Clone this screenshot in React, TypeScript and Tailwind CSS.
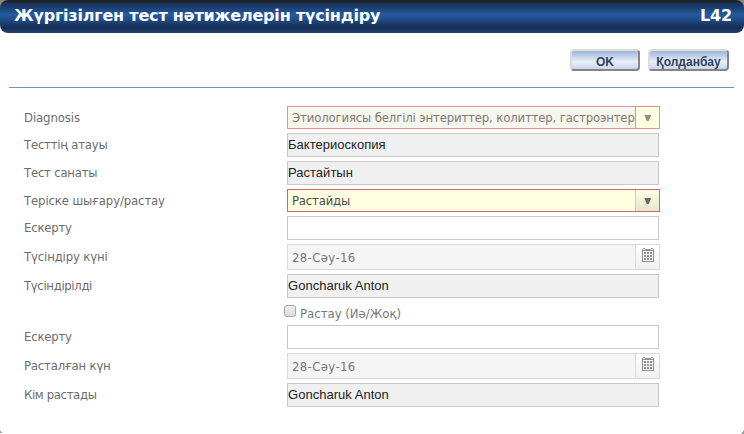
import type { ReactNode } from 'react';

const ui = "font-['DejaVu_Sans_Condensed','DejaVu_Sans',sans-serif] [font-stretch:condensed]";
const arial = "font-['Liberation_Sans',Arial,sans-serif]";

interface RowProps {
  label: string;
  height?: string;
  labelStyle?: string;
  children: ReactNode;
}

function Row({ label, height = 'h-6', labelStyle = 'pt-1 tracking-[-0.22px]', children }: RowProps) {
  return (
    <div className={`mb-1 flex ${height}`}>
      <div className={`w-[263px] shrink-0 text-[13px] leading-4 whitespace-nowrap text-[#6c6c6c] ${labelStyle}`}>{label}</div>
      {children}
    </div>
  );
}

function ReadOnly({ text }: { text: string }) {
  return (
    <div className={`${arial} h-6 w-[372px] border border-[#c9c9c9] bg-[#f0f0f0] text-[13px] leading-[21px] tracking-[0.02px] whitespace-nowrap text-[#222]`}>
      {text}
    </div>
  );
}

function Empty() {
  return <div className="h-6 w-[372px] border border-[#c9c9c9] bg-white" />;
}

function Arrow({ color }: { color: string }) {
  return (
    <svg width="8" height="6" viewBox="0 0 8 6" fill={color}>
      <path d="M0.3 0H7.2L4.7 6H2.8Z" />
    </svg>
  );
}

function DateField({ text }: { text: string }) {
  return (
    <div className="flex h-[26px] w-[373px] border border-[#dadada] bg-[#f5f5f5]">
      <div className="w-[347px] pt-[5px] pl-1 text-[13px] leading-4 tracking-[0.35px] text-[#777]">{text}</div>
      <div className="flex w-6 justify-center border-l border-[#dadada] bg-linear-to-b from-white to-[#f0f0f0] pt-[3px]">
        <svg width="12" height="14" viewBox="0 0 12 14" shapeRendering="crispEdges" fill="#909090">
          <path fillRule="evenodd" d="M0 1H12V14H0ZM1 3V13H11V3Z" />
          <path d="M1 0h2v1h-2zM9 0h2v1h-2zM2 4h2v2h-2zM5 4h2v2h-2zM8 4h2v2h-2zM2 7h2v2h-2zM5 7h2v2h-2zM8 7h2v2h-2zM2 10h2v2h-2zM5 10h2v2h-2zM8 10h2v2h-2z" />
          <path fill="#fff" d="M1 1h2v1h-2zM9 1h2v1h-2z" />
        </svg>
      </div>
    </div>
  );
}

function Button({ text, width }: { text: string; width: string }) {
  return (
    <button className={`${arial} ${width} h-[22px] rounded-[4px] border-2 border-t-[#dcdcdc] border-r-[#858585] border-b-[#858585] border-l-[#dcdcdc] bg-linear-to-b from-[#9fb5d8] via-[#e9eff7] via-60% to-[#c8d6e8] pt-1 text-xs leading-[14px] font-bold whitespace-nowrap text-[#2b3f60]`}>
      {text}
    </button>
  );
}

export default function App() {
  return (
    <div className={`${ui} flex h-[434px] w-[744px] flex-col overflow-hidden bg-white`}>
      <div className="bg-linear-to-b from-[#8f8b78] from-50% to-white to-50%">
        <header className="flex h-[33px] justify-between rounded-[8px] bg-[linear-gradient(#20231f_0px,#20231f_1px,#182f50_3px,#1c4175_8px,#265aa0_15px,#1f4a85_20px,#162d50_28px,#1d4275_33px)] pt-[6px] pr-3 pl-[14px] font-['DejaVu_Sans'] [font-stretch:normal] text-base leading-5 font-bold tracking-[-0.19px] whitespace-nowrap text-white">
          <h1>Жүргізілген тест нәтижелерін түсіндіру</h1>
          <span>L42</span>
        </header>
      </div>
      <div className="flex justify-end gap-2 pt-4 pr-[15px]">
        <Button text="OK" width="w-[70px]" />
        <Button text="Қолданбау" width="w-[81px]" />
      </div>
      <hr className="mt-4 mr-[10px] ml-[9px] border-t border-[#7090bf]" />
      <form className="pt-[18px] pl-6">
        <Row label="Diagnosis" height="h-[23px]" labelStyle="pt-1 tracking-[-0.1px]">
          <div className="flex h-[23px] w-[373px] border border-[#e89090] bg-[#f6f5ee]">
            <div className="w-[347px] pt-[3px] pl-1 text-[13px] leading-4 tracking-[-0.15px] whitespace-nowrap text-[#7c7c74]">Этиологиясы белгілі энтериттер, колиттер, гастроэнтер</div>
            <div className="flex w-6 items-center justify-center border-l border-[#e89090] bg-[#ffffe1]"><Arrow color="#8e8e84" /></div>
          </div>
        </Row>
        <Row label="Тесттің атауы"><ReadOnly text="Бактериоскопия" /></Row>
        <Row label="Тест санаты"><ReadOnly text="Растайтын" /></Row>
        <Row label="Теріске шығару/растау" height="h-[23px]" labelStyle="pt-1 tracking-[-0.13px]">
          <div className="flex h-[23px] w-[373px] border border-[#df626a] bg-[#ffffe1]">
            <div className="w-[347px] pt-[3px] pl-1 text-[13px] leading-4 tracking-[-0.2px] text-[#4c4c4c]">Растайды</div>
            <div className="flex w-6 items-center justify-center border-l border-[#c9c9c9] bg-linear-to-b from-[#ffffe6] to-[#e5e5ca]"><Arrow color="#666" /></div>
          </div>
        </Row>
        <Row label="Ескерту"><Empty /></Row>
        <Row label="Түсіндіру күні" height="h-[26px]" labelStyle="pt-[5px] tracking-[-0.15px]"><DateField text="28-Сәу-16" /></Row>
        <Row label="Түсіндірілді" labelStyle="pt-1 tracking-[-0.35px]"><ReadOnly text="Goncharuk Anton" /></Row>
        <div className="mt-[7px] flex h-5 pl-[260px]">
          <div className="h-3 w-3 rounded-[3px] border border-[#a8a8a8] bg-linear-to-b from-[#eee] to-[#dcdcdc]" />
          <span className="pt-[1px] pl-1 text-[13px] leading-4 text-[#777]">Растау (Иә/Жоқ)</span>
        </div>
        <Row label="Ескерту"><Empty /></Row>
        <Row label="Расталған күн" height="h-[26px]" labelStyle="pt-[5px] tracking-[-0.2px]"><DateField text="28-Сәу-16" /></Row>
        <Row label="Кім растады" labelStyle="pt-1 tracking-[-0.35px]"><ReadOnly text="Goncharuk Anton" /></Row>
      </form>
      <div className="mt-auto flex justify-between">
        <svg width="3" height="3" viewBox="0 0 3 3" fill="#999"><path d="M0 0.5L2.5 3H0Z" /></svg>
        <svg width="3" height="4" viewBox="0 0 3 4" fill="#999"><path d="M3 0V4H0Z" /></svg>
      </div>
    </div>
  );
}
